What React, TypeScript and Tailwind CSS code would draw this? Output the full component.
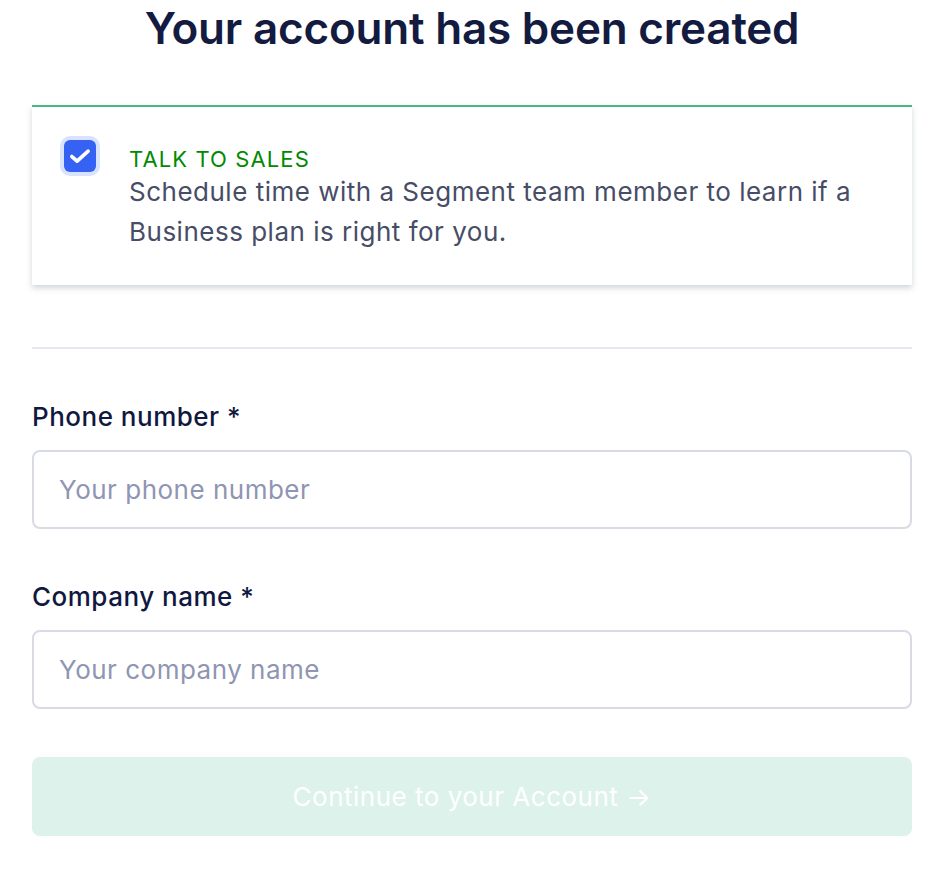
import React from 'react';

const App: React.FC = () => {
  return (
    <div className="min-h-screen bg-white font-['Inter',sans-serif] text-[#141b41]">
      <div className="mx-8 w-[880px]">
        <h1 className="text-center text-[44px] font-semibold leading-[56px] tracking-[-0.2px]">
          Your account has been created
        </h1>

        <div className="mt-[49px] border-t-2 border-[#47b881] bg-white shadow-[0_3px_6px_rgba(67,90,111,0.25)]">
          <div className="flex pl-7 pr-6 pt-[28px] pb-[33px]">
            <div className="mt-[1px] flex h-10 w-10 flex-shrink-0 items-center justify-center rounded-[10px] bg-[#dae3fd]">
              <div className="flex h-8 w-8 items-center justify-center rounded-[6px] bg-[#3662f4]">
                <svg viewBox="0 0 24 24" className="h-[26px] w-[26px]" fill="none" stroke="white" strokeWidth={3.4} strokeLinecap="round" strokeLinejoin="round">
                  <path d="M4.5 12.5l4.8 4.3L19.5 7.5" />
                </svg>
              </div>
            </div>
            <div className="ml-[29px]">
              <div className="mt-[11px] text-[22px] leading-[26px] tracking-[1.1px] text-[#008a00]">TALK TO SALES</div>
              <p className="text-[26px] leading-[40px] tracking-[0.5px] text-[#474d66]">
                Schedule time with a Segment team member to learn if a Business plan is right for you.
              </p>
            </div>
          </div>
        </div>

        <div className="mt-[62px] h-[2px] bg-[#e6e8f0]" />

        <div className="mt-[52px]">
          <label className="block text-[26px] font-medium leading-[32px] tracking-[0.5px] text-[#101840]">Phone number *</label>
          <input
            className="mt-[17px] h-[79px] w-full rounded-[8px] border-2 border-[#d8dae5] px-[25px] text-[26px] tracking-[0.5px] text-[#101840] placeholder-[#8f95b2] outline-none"
            placeholder="Your phone number"
          />
        </div>

        <div className="mt-[52px]">
          <label className="block text-[26px] font-medium leading-[32px] tracking-[0.5px] text-[#101840]">Company name *</label>
          <input
            className="mt-[17px] h-[79px] w-full rounded-[8px] border-2 border-[#d8dae5] px-[25px] text-[26px] tracking-[0.5px] text-[#101840] placeholder-[#8f95b2] outline-none"
            placeholder="Your company name"
          />
        </div>

        <button
          disabled
          className="mt-[48px] flex h-[79px] w-full items-center justify-center rounded-[8px] bg-[#dcf2ea] text-[26px] tracking-[0.5px] text-white"
        >
          Continue to your Account →
        </button>
      </div>
    </div>
  );
};

export default App;
